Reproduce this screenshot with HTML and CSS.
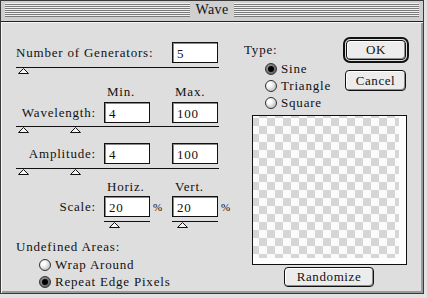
FILE: index.html
```html
<!DOCTYPE html>
<html lang="en">
<head>
  <meta charset="UTF-8">
  <title>Wave</title>
  <link rel="stylesheet" href="styles.css">
</head>
<body>
  <div class="window">
    <div class="titlebar">
      <div class="stripes"><span class="title">Wave</span></div>
    </div>
    <div class="dialog">
      <div class="left">
        <div class="row gen">
          <span class="label wide">Number of Generators:</span>
          <span class="field c2">5</span>
        </div>
        <div class="slider full">
          <span class="thumb t1"></span>
        </div>
        <div class="row head head1">
          <span class="c1 h">Min.</span>
          <span class="c2 h">Max.</span>
        </div>
        <div class="row wl">
          <span class="label">Wavelength:</span>
          <span class="field">4</span>
          <span></span>
          <span class="field">100</span>
        </div>
        <div class="slider full s2">
          <span class="thumb t1"></span>
          <span class="thumb t2"></span>
        </div>
        <div class="row amp">
          <span class="label">Amplitude:</span>
          <span class="field">4</span>
          <span></span>
          <span class="field">100</span>
        </div>
        <div class="slider full s3">
          <span class="thumb t1"></span>
          <span class="thumb t2"></span>
        </div>
        <div class="row head head2">
          <span class="c1 h">Horiz.</span>
          <span class="c2 h">Vert.</span>
        </div>
        <div class="row scale">
          <span class="label">Scale:</span>
          <span class="field">20</span>
          <span class="pct">%</span>
          <span class="field">20</span>
          <span class="pct">%</span>
        </div>
        <div class="row subs">
          <div class="slider mini c1"><span class="thumb t3"></span></div>
          <div class="slider mini c2"><span class="thumb t3"></span></div>
        </div>
        <div class="group-label">Undefined Areas:</div>
        <div class="radios undef">
          <div class="radio"><span class="dot"></span>Wrap Around</div>
          <div class="radio"><span class="dot on"></span>Repeat Edge Pixels</div>
        </div>
      </div>
      <div class="right">
        <div class="top">
          <div class="type">
            <div class="type-label">Type:</div>
            <div class="radios">
              <div class="radio"><span class="dot on"></span>Sine</div>
              <div class="radio"><span class="dot"></span>Triangle</div>
              <div class="radio"><span class="dot"></span>Square</div>
            </div>
          </div>
          <div class="buttons">
            <div class="default-ring"><div class="btn ok">OK</div></div>
            <div class="btn cancel">Cancel</div>
          </div>
        </div>
        <div class="preview"><div class="checker"></div></div>
        <div class="btn randomize">Randomize</div>
      </div>
    </div>
  </div>
</body>
</html>
```
FILE: styles.css
```css
* { margin: 0; padding: 0; box-sizing: border-box; }
body { background: #e2e2e2; font-family: "Liberation Serif", serif; font-size: 13px; letter-spacing: 0.8px; color: #111; line-height: 14px; }

.window { width: 424px; height: 294px; border: 1px solid #3a3a3a; display: flex; flex-direction: column; background: #dedede; overflow: hidden; }
.titlebar { height: 21px; padding: 2px 4px 4px; background: #cfcfcf; border-bottom: 1px solid #222; }
.stripes { height: 14px; display: flex; justify-content: center; background: repeating-linear-gradient(#f2f2f2 0 1px, #7a7a7a 1px 2px); }
.title { background: #cfcfcf; padding: 0 5px 0 5px; line-height: 14px; font-size: 14px; letter-spacing: 0.4px; }

.dialog { flex: 1; display: flex; box-shadow: inset 1px 1px 0 #f6f6f6, inset -2px -2px 0 #9a9a9a; }

/* left column */
.left { padding: 20px 0 0 14px; width: 230px; }
.row { display: grid; grid-template-columns: 89px 46px 22px 46px 12px; align-items: center; }
.label { text-align: right; padding-right: 8px; white-space: nowrap; }
.label.wide { grid-column: 1 / 4; text-align: left; padding: 0 0 0 1px; }
.c1 { grid-column: 2; }
.c2 { grid-column: 4; }
.field { height: 21px; background: #fff; border: 1px solid #111; box-shadow: inset 1px 1px 0 #8a8a8a; padding: 3px 0 0 4px; line-height: 15px; }
.pct { padding-left: 3px; font-size: 11px; }
.h { padding-left: 3px; }

.slider { border-top: 1px solid #111; height: 7px; display: flex; align-items: flex-start; }
.slider.full { width: 203px; margin-left: 1px; }
.thumb { width: 11px; height: 6px; background: url("data:image/svg+xml,%3Csvg xmlns='http://www.w3.org/2000/svg' width='11' height='6'%3E%3Cpolygon points='0.5,5.5 5.5,0.5 10.5,5.5' fill='%23f4f4f4' stroke='%23111'/%3E%3C/svg%3E"); }
.t1 { margin-left: 2px; }
.t2 { margin-left: 41px; }
.t3 { margin-left: 5px; }

.gen { margin-bottom: 4px; }
.head1 { margin-top: 11px; }
.wl { margin-top: 3px; margin-bottom: 3px; }
.amp { margin-top: 10px; margin-bottom: 4px; }
.head2 { margin-top: 5px; }
.scale { margin-top: 2px; margin-bottom: 4px; }
.subs .slider { height: 7px; }
.group-label { margin-top: 12px; padding-left: 1px; }
.undef { margin-top: 2px; padding-left: 24px; }

.radios { display: flex; flex-direction: column; }
.radio { display: flex; align-items: center; height: 17px; gap: 4px; }
.dot { width: 12px; height: 12px; border-radius: 50%; border: 1px solid #333; background: radial-gradient(circle at 35% 35%, #fff 0 20%, #bdbdbd 80%); display: flex; align-items: center; justify-content: center; }
.dot.on { background: radial-gradient(circle at 35% 35%, #999, #555); }
.dot.on::after { content: ""; width: 6px; height: 6px; border-radius: 50%; background: #000; }

/* right column */
.right { padding: 15px 0 0 13px; width: 178px; display: flex; flex-direction: column; }
.top { display: flex; height: 78px; }
.type { width: 100px; padding-top: 6px; }
.type .radios { margin-top: 3px; padding-left: 21px; }

.buttons { display: flex; flex-direction: column; align-items: flex-start; }
.btn { border: 1px solid #111; border-radius: 4px; background: #ececec; box-shadow: inset -1px -1px 0 #8c8c8c, inset 1px 1px 0 #fff; text-align: center; letter-spacing: 0.6px; }
.default-ring { border: 2px solid #111; border-radius: 7px; padding: 1px; }
.ok { width: 60px; height: 20px; line-height: 18px; }
.cancel { width: 61px; height: 21px; line-height: 19px; margin: 7px 0 0 2px; }

.preview { margin-left: 8px; width: 155px; height: 150px; border: 1px solid #111; background: #fff; padding: 0 7px 6px 0; }
.checker { width: 100%; height: 100%; background-color: #fbfbfb; background-image:
  linear-gradient(45deg, #d6d6d6 25%, transparent 25%, transparent 75%, #d6d6d6 75%),
  linear-gradient(45deg, #d6d6d6 25%, transparent 25%, transparent 75%, #d6d6d6 75%);
  background-size: 16px 16px; background-position: 6px 2px, 14px 10px; }
.randomize { margin: 2px 0 0 40px; width: 90px; height: 20px; line-height: 18px; }
```
